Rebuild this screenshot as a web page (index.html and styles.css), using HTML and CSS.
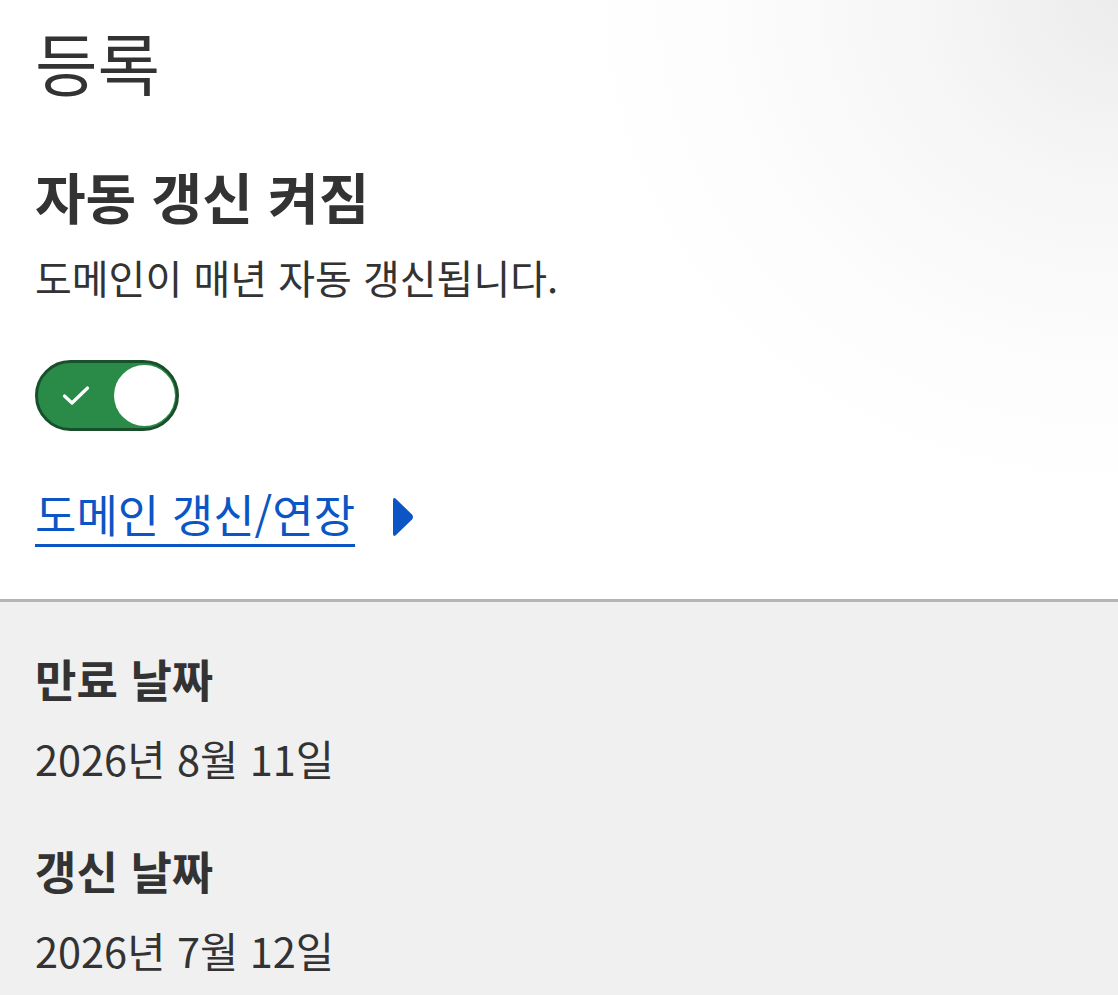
FILE: index.html
```html
<!doctype html>
<html lang="ko">
<head>
  <meta charset="UTF-8">
  <meta name="viewport" content="width=device-width, initial-scale=1.0">
  <title>등록</title>
  <link rel="stylesheet" href="styles.css">
</head>
<body>
  <main class="page">
    <section class="renewal">
      <h1 class="title">등록</h1>

      <h2 class="auto-title">자동 갱신 켜짐</h2>
      <p class="auto-desc">도메인이 매년 자동 갱신됩니다.</p>

      <button class="toggle is-on" role="switch" aria-checked="true" aria-label="자동 갱신">
        <svg class="toggle-check" viewBox="0 0 28 21" width="28" height="21" aria-hidden="true">
          <path d="M2.5 11 L10 18 L25.5 3" fill="none" stroke="#fff" stroke-width="3.2" stroke-linecap="round" stroke-linejoin="round"/>
        </svg>
        <span class="toggle-knob"></span>
      </button>

      <div class="renew-row">
        <a class="renew-link" href="#">도메인 갱신/연장</a>
        <svg class="renew-arrow" viewBox="0 0 22 40" width="22" height="40" aria-hidden="true">
          <path d="M3.5 1.5 Q1 0 1 3.5 V36.5 Q1 40 3.5 38.5 L20 22.5 Q22 20 20 17.5 Z" fill="#0b55c4"/>
        </svg>
      </div>
    </section>

    <section class="dates">
      <dl class="date-list">
        <dt>만료 날짜</dt>
        <dd>2026년 8월 11일</dd>
        <dt>갱신 날짜</dt>
        <dd>2026년 7월 12일</dd>
      </dl>
    </section>
  </main>
</body>
</html>
```

FILE: styles.css
```css
body { margin: 0; font-family: "Noto Sans CJK KR", "Noto Sans", sans-serif; color: #333; background: #fff; }
.page { min-height: 995px; display: flex; flex-direction: column; }

.renewal { padding: 22px 35px 57px; background: radial-gradient(ellipse 560px 520px at 100% 0, #ececec 0%, #f6f6f6 35%, #fdfdfd 75%, #fff 100%); }
.title { margin: 0; font-size: 68px; line-height: 80px; font-weight: 400; }
.auto-title { margin: 61px 0 0; font-size: 55px; line-height: 64px; font-weight: 700; }
.auto-desc { margin: 26px 0 0; font-size: 40px; line-height: 48px; }

.toggle { display: flex; align-items: center; justify-content: space-between; box-sizing: border-box; width: 144px; height: 71px; margin-top: 59px; padding: 0 1px 0 24px; border: 3px solid #18502b; border-radius: 36px; background: #2a8a48; cursor: pointer; }
.toggle-knob { width: 61px; height: 61px; border-radius: 50%; background: #fff; }

.renew-row { display: flex; align-items: center; gap: 37px; margin-top: 55px; }
.renew-link { font-size: 45px; line-height: 56px; color: #0b55c4; text-decoration: underline; text-decoration-thickness: 3px; text-underline-offset: 11px; }
.renew-arrow { margin-top: 6px; }

.dates { flex: 1; background: #f0f0f0; border-top: 3px solid #b5b5b5; padding: 50px 35px 0; }
.date-list { margin: 0; }
.date-list dt { font-size: 45px; line-height: 54px; font-weight: 700; }
.date-list dd { margin: 27px 0 61px; font-size: 41.5px; line-height: 50px; }
.date-list dd:last-child { margin-bottom: 0; }
```
